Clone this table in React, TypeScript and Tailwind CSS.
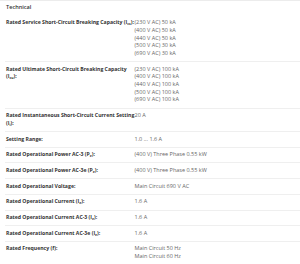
import React from "react";

type Row = { label: React.ReactNode; values: string[] };

const Sub = ({ children }: { children: React.ReactNode }) => (
  <sub className="text-[3.4px] align-baseline relative top-[1px]">{children}</sub>
);

const rows: Row[] = [
  {
    label: (
      <>
        Rated Service Short-Circuit Breaking Capacity (I<Sub>cs</Sub>):
      </>
    ),
    values: [
      "(230 V AC) 50 kA",
      "(400 V AC) 50 kA",
      "(440 V AC) 50 kA",
      "(500 V AC) 30 kA",
      "(690 V AC) 30 kA",
    ],
  },
  {
    label: (
      <>
        Rated Ultimate Short-Circuit Breaking Capacity
        <br />
        (I<Sub>cu</Sub>):
      </>
    ),
    values: [
      "(230 V AC) 100 kA",
      "(400 V AC) 100 kA",
      "(440 V AC) 100 kA",
      "(500 V AC) 100 kA",
      "(690 V AC) 100 kA",
    ],
  },
  {
    label: (
      <>
        Rated Instantaneous Short-Circuit Current Setting
        <br />
        (I<Sub>i</Sub>):
      </>
    ),
    values: ["20 A"],
  },
  { label: <>Setting Range:</>, values: ["1.0 ... 1.6 A"] },
  {
    label: (
      <>
        Rated Operational Power AC-3 (P<Sub>e</Sub>):
      </>
    ),
    values: ["(400 V) Three Phase 0.55 kW"],
  },
  {
    label: (
      <>
        Rated Operational Power AC-3e (P<Sub>e</Sub>):
      </>
    ),
    values: ["(400 V) Three Phase 0.55 kW"],
  },
  { label: <>Rated Operational Voltage:</>, values: ["Main Circuit 690 V AC"] },
  {
    label: (
      <>
        Rated Operational Current (I<Sub>e</Sub>):
      </>
    ),
    values: ["1.6 A"],
  },
  {
    label: (
      <>
        Rated Operational Current AC-3 (I<Sub>e</Sub>):
      </>
    ),
    values: ["1.6 A"],
  },
  {
    label: (
      <>
        Rated Operational Current AC-3e (I<Sub>e</Sub>):
      </>
    ),
    values: ["1.6 A"],
  },
  {
    label: <>Rated Frequency (f):</>,
    values: ["Main Circuit 50 Hz", "Main Circuit 60 Hz"],
  },
];

export default function App() {
  return (
    <div
      className="w-[300px] h-[264px] overflow-hidden bg-white border-t border-[#ececec]"
      style={{ fontFamily: '"Open Sans", "Liberation Sans", sans-serif' }}
    >
      <div className="h-[14.6px] leading-[12px] pl-[6px] text-[5.6px] font-semibold text-[#333]">
        Technical
      </div>
      <div className="flex flex-col ml-[5px]">
        {rows.map((r, i) => (
          <div
            key={i}
            className={`flex py-[3.5px] leading-[7.7px] ${
              i < rows.length - 1 ? "border-b border-[#efefef]" : ""
            }`}
          >
            <div className="w-[129px] shrink-0 pl-[1px] whitespace-nowrap text-[5.15px] font-bold text-[#333]">
              {r.label}
            </div>
            <div className="flex flex-col pl-[0.5px] text-[5.5px] text-[#666] whitespace-nowrap">
              {r.values.map((v, j) => (
                <div key={j}>{v}</div>
              ))}
            </div>
          </div>
        ))}
      </div>
    </div>
  );
}
